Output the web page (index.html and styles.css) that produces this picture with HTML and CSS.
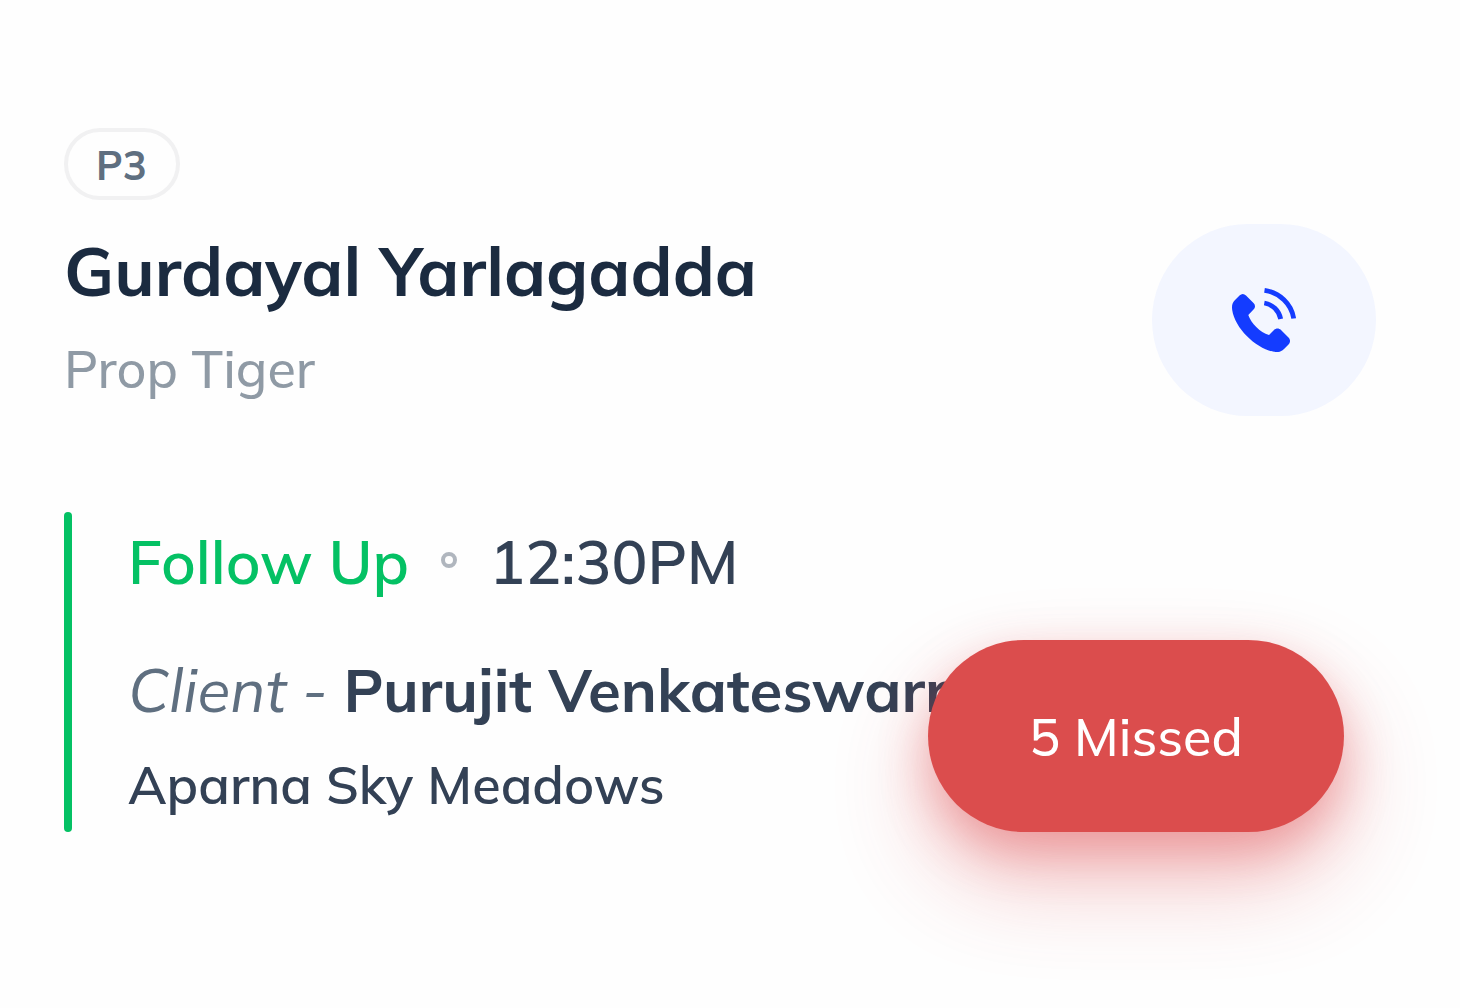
FILE: index.html
```html
<!DOCTYPE html>
<html lang="en">
<head>
<meta charset="utf-8">
<meta name="viewport" content="width=device-width, initial-scale=1">
<title>Gurdayal Yarlagadda</title>
<link rel="stylesheet" href="styles.css">
</head>
<body>
<main class="lead">
  <header class="lead-header">
    <div class="lead-info">
      <span class="badge">P3</span>
      <h1 class="lead-name">Gurdayal Yarlagadda</h1>
      <p class="lead-source">Prop Tiger</p>
    </div>
    <button class="call" type="button" aria-label="Call">
      <svg class="call-icon" viewBox="0 0 64 64" aria-hidden="true">
        <path fill="currentColor" d="M7.500 7.500C9.500 5.500 12 5.500 14 7.500L21.500 15C23.500 17 23.500 19.500 21.500 21.500L16.300 27C19 35 28 44.500 37 47L42 42C44 40 47 40 49 42L56.500 49.500C58.500 51.500 58.500 54.500 56.500 56.500L52 61C49 64 46 64.500 42 63.800C25 61 3 41 0.200 22C-0.300 18 0 15 3 12Z"/>
        <path fill="none" stroke="currentColor" stroke-width="4.800" d="M32.500 2.400C47.500 4.500 59.500 16 61.700 30.500M32.300 15C40.500 16.300 47 22.500 48.700 31"/>
      </svg>
    </button>
  </header>
  <section class="event">
    <p class="event-head">
      <span class="event-type">Follow Up</span>
      <span class="dot"></span>
      <time datetime="12:30">12:30PM</time>
    </p>
    <p class="client"><em class="client-label">Client -</em> <strong>Purujit Venkateswarr</strong></p>
    <p class="project">Aparna Sky Meadows</p>
    <button class="missed" type="button">5 Missed</button>
  </section>
</main>
</body>
</html>
```
FILE: styles.css
```css
* {
  box-sizing: border-box;
}

body {
  margin: 0;
  background: #fefefe;
  color: #334155;
  font-family: Mulish, Muli, Lato, sans-serif;
}

h1,
p {
  margin: 0;
}

button {
  border: 0;
  font: inherit;
  cursor: pointer;
}

.lead {
  padding: 128px 84px 176px 64px;
}

.lead-header {
  display: flex;
  justify-content: space-between;
  align-items: flex-start;
}

.lead-info {
  display: flex;
  flex-direction: column;
  align-items: flex-start;
  gap: 28px;
}

.badge {
  min-width: 116px;
  padding: 2px 28px 0;
  border: 4px solid #f1f1f2;
  border-radius: 36px;
  color: #5f6f80;
  font-size: 40px;
  font-weight: 700;
  line-height: 62px;
}

.lead-name {
  color: #1b2b40;
  font-size: 68px;
  font-weight: 700;
  line-height: 86px;
}

.lead-source {
  color: #8f9aa5;
  font-size: 52px;
  font-weight: 500;
  line-height: 54px;
}

.call {
  display: grid;
  place-items: center;
  width: 224px;
  height: 192px;
  margin-top: 96px;
  border-radius: 96px;
  background: #f3f6ff;
  color: #143cff;
}

.call-icon {
  width: 64px;
  height: 64px;
}

.event {
  position: relative;
  margin-top: 96px;
  padding: 12px 0 18px 64px;
  font-size: 60px;
  line-height: 76px;
}

.event::before {
  content: "";
  position: absolute;
  inset: 0 auto 0 0;
  width: 8px;
  border-radius: 4px;
  background: #04c164;
}

.event-head {
  display: flex;
  align-items: center;
  gap: 32px;
  font-weight: 600;
}

.event-type {
  color: #04c164;
}

.dot {
  width: 16px;
  height: 16px;
  margin-bottom: 4px;
  border: 4px solid #b0b6be;
  border-radius: 50%;
}

.client {
  margin-top: 52px;
}

.client-label {
  color: #5f6f80;
}

.project {
  margin-top: 28px;
  font-size: 52px;
  font-weight: 600;
  line-height: 58px;
}

.missed {
  position: absolute;
  right: 32px;
  bottom: 0;
  width: 416px;
  height: 192px;
  padding-top: 3px;
  border-radius: 96px;
  background: #db4d4d;
  box-shadow: 0 48px 96px rgba(219, 60, 64, 0.3), 0 20px 48px rgba(219, 60, 64, 0.34);
  color: #fff;
  font-size: 52px;
  font-weight: 500;
}
```
